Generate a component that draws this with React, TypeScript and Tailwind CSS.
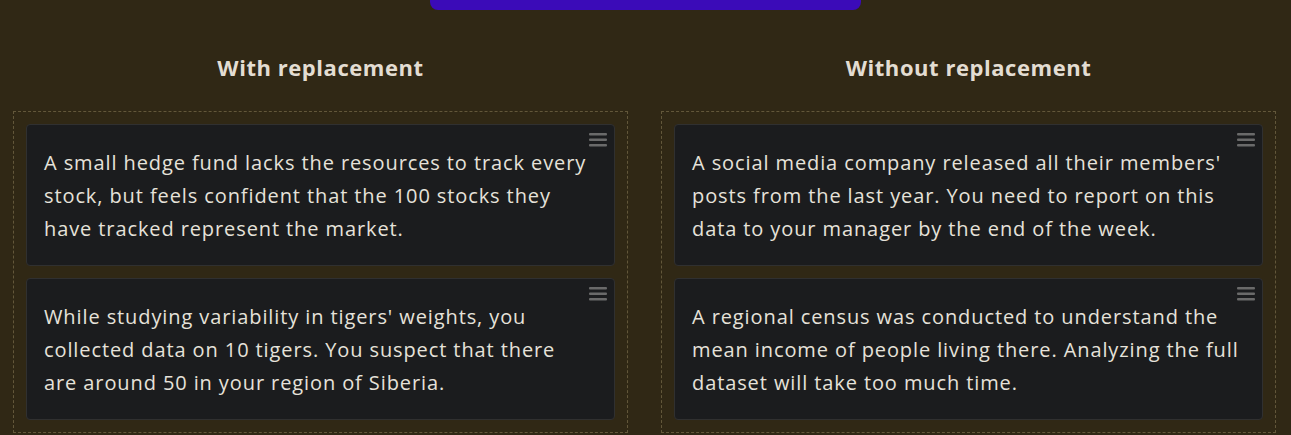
import { useState } from "react";

type Column = {
  title: string;
  cards: string[];
};

const columns: Column[] = [
  {
    title: "With replacement",
    cards: [
      "A small hedge fund lacks the resources to track every stock, but feels confident that the 100 stocks they have tracked represent the market.",
      "While studying variability in tigers' weights, you collected data on 10 tigers. You suspect that there are around 50 in your region of Siberia.",
    ],
  },
  {
    title: "Without replacement",
    cards: [
      "A social media company released all their members' posts from the last year. You need to report on this data to your manager by the end of the week.",
      "A regional census was conducted to understand the mean income of people living there. Analyzing the full dataset will take too much time.",
    ],
  },
];

function DragHandle() {
  return (
    <svg width="18" height="14" viewBox="0 0 18 14" className="absolute right-[7px] top-[8px]">
      <rect x="0" y="0" width="18" height="2.5" rx="1" fill="#6a6a6a" />
      <rect x="0" y="5.5" width="18" height="2.5" rx="1" fill="#6a6a6a" />
      <rect x="0" y="11" width="18" height="2.5" rx="1" fill="#6a6a6a" />
    </svg>
  );
}

function Card({ text }: { text: string }) {
  return (
    <div className="relative bg-[#1b1c1e] border border-[#303030] rounded-[4px] pl-[17px] pr-[21px] pt-[21px] pb-[20px]">
      <DragHandle />
      <p className="text-[20px] leading-[33px] tracking-[0.9px] text-[#e6e2da]">{text}</p>
    </div>
  );
}

export default function App() {
  const [cols] = useState(columns);

  return (
    <div
      className="w-[1291px] h-[435px] overflow-hidden bg-[#302815]"
      style={{ fontFamily: "'Open Sans', 'Noto Sans', sans-serif" }}
    >
      <div className="flex justify-center">
        <div className="w-[431px] h-[10px] bg-[#3b0bb8] rounded-b-[8px]" />
      </div>
      <div className="flex gap-[33px] pl-[13px] pr-[15px] pt-[42px]">
        {cols.map((col) => (
          <div key={col.title} className="flex-1 flex flex-col">
            <h2 className="text-center text-[22px] font-bold leading-[30px] tracking-[0.55px] text-[#e3ddd2]">
              {col.title}
            </h2>
            <div className="mt-[29px] border border-dashed border-[#62573a] p-[12px] flex flex-col gap-[12px]">
              {col.cards.map((c) => (
                <Card key={c} text={c} />
              ))}
            </div>
          </div>
        ))}
      </div>
    </div>
  );
}
